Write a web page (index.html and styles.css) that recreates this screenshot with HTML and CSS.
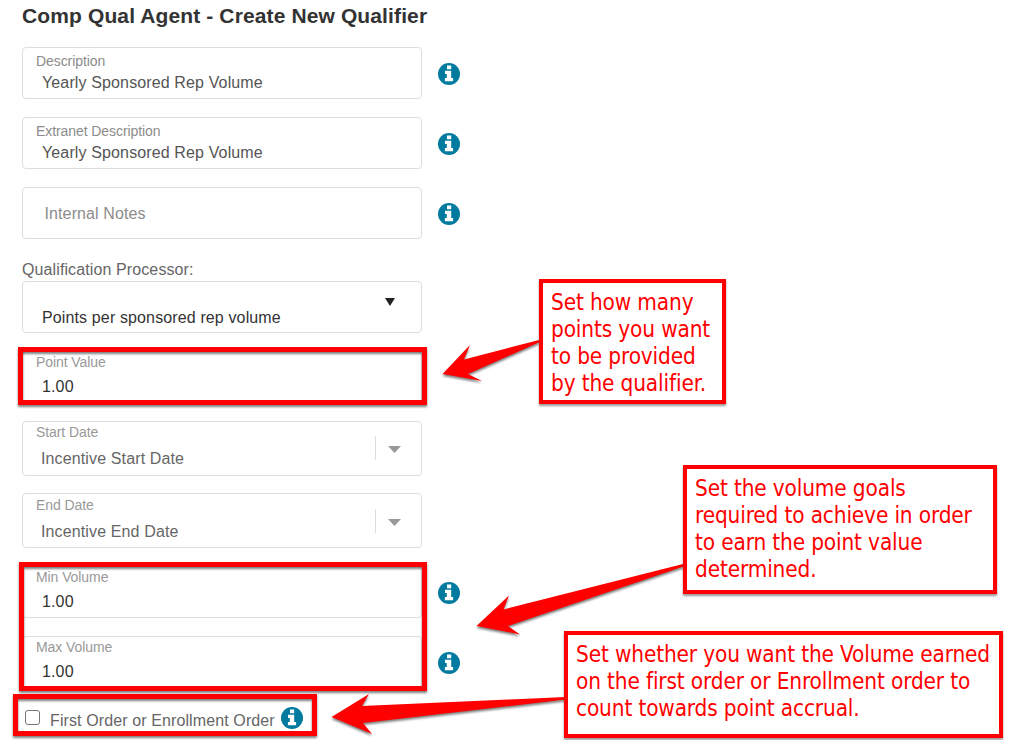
FILE: index.html
```
<!DOCTYPE html>
<html lang="en">
<head>
<meta charset="utf-8">
<title>Comp Qual Agent - Create New Qualifier</title>
<link rel="stylesheet" href="styles.css">
</head>
<body>
<svg class="defs" width="0" height="0">
  <symbol id="info" viewBox="0 0 22 22">
    <circle cx="11" cy="11" r="11" fill="#007a9f"/>
    <path fill="#fff" d="M9 2.400h4.200v3.800H9zM7 7.800h6.200v7.200h1.900v3.200H6.900V15h1.900v-4H7z"/>
  </symbol>
</svg>
<main class="form">
  <h1 class="title">Comp Qual Agent - Create New Qualifier</h1>
  <div class="row">
    <div class="field"><span class="label">Description</span><span class="value">Yearly Sponsored Rep Volume</span></div>
    <svg class="info"><use href="#info"/></svg>
  </div>
  <div class="row">
    <div class="field"><span class="label">Extranet Description</span><span class="value">Yearly Sponsored Rep Volume</span></div>
    <svg class="info"><use href="#info"/></svg>
  </div>
  <div class="row">
    <div class="field empty"><span class="placeholder">Internal Notes</span></div>
    <svg class="info"><use href="#info"/></svg>
  </div>
  <div class="caption">Qualification Processor:</div>
  <div class="row processor">
    <div class="field select"><span class="value dark">Points per sponsored rep volume</span>
      <svg class="caret" viewBox="0 0 10 8"><path d="M0 0h10L5 8z" fill="#222"/></svg></div>
  </div>
  <div class="row">
    <div class="field numeric"><span class="label">Point Value</span><span class="value">1.00</span></div>
  </div>
  <div class="row date">
    <div class="field picker">
      <div class="text"><span class="label">Start Date</span><span class="value">Incentive Start Date</span></div>
      <div class="drop"><svg class="arrow" viewBox="0 0 13 7"><path d="M0 0h13L6.500 7z" fill="#999"/></svg></div>
    </div>
  </div>
  <div class="row date">
    <div class="field picker picker-end">
      <div class="text"><span class="label">End Date</span><span class="value">Incentive End Date</span></div>
      <div class="drop"><svg class="arrow" viewBox="0 0 13 7"><path d="M0 0h13L6.500 7z" fill="#999"/></svg></div>
    </div>
  </div>
  <div class="row">
    <div class="field numeric"><span class="label">Min Volume</span><span class="value">1.00</span></div>
    <svg class="info"><use href="#info"/></svg>
  </div>
  <div class="row">
    <div class="field numeric"><span class="label">Max Volume</span><span class="value">1.00</span></div>
    <svg class="info"><use href="#info"/></svg>
  </div>
  <div class="check"><span class="box"></span><span class="check-text">First Order or Enrollment Order</span><svg class="info"><use href="#info"/></svg></div>
</main>

<div class="mark mark-point"></div>
<div class="mark mark-volume"></div>
<div class="mark mark-order"></div>
<svg class="arrows" viewBox="0 0 1035 740">
  <path d="M442.500 374L470 345L464 359.500L541 339.500V341.500L468 374L482 381Z"/>
  <path d="M476.500 626L509 595.500L503.500 609.500L685 563.500V566L508 626L520 634.500Z"/>
  <path d="M331.500 717L369 694L362 706L566 697V699.500L363 723L372 734Z"/>
</svg>
<div class="callout callout-point"><span>Set how many</span><span>points you want</span><span>to be provided</span><span>by the qualifier.</span></div>
<div class="callout callout-volume"><span>Set the volume goals</span><span>required to achieve in order</span><span>to earn the point value</span><span>determined.</span></div>
<div class="callout callout-order"><span>Set whether you want the Volume earned</span><span>on the first order or Enrollment order to</span><span>count towards point accrual.</span></div>
</body>
</html>
```
FILE: styles.css
```
* { box-sizing: border-box; }
body {
  margin: 0;
  width: 1035px;
  height: 740px;
  position: relative;
  overflow: hidden;
  background: #fff;
  font: 16px/20px "Liberation Sans", Arial, sans-serif;
  letter-spacing: .11px;
  color: #555;
}
.defs { position: absolute; }
.form { padding: 3px 0 0 22px; }
.title { margin: 0 0 18px; font-size: 21px; line-height: 26px; letter-spacing: .12px; color: #333; white-space: nowrap; }
.row { display: flex; align-items: center; gap: 16px; height: 52px; margin-bottom: 18px; }
.field {
  display: flex;
  flex-direction: column;
  width: 400px;
  height: 52px;
  padding: 5px 13px 0;
  border: 1px solid #ddd;
  border-radius: 4px;
}
.label { font-size: 14px; line-height: 17px; letter-spacing: -.08px; color: #8c8c8c; }
.value { padding-left: 6px; margin-top: 3px; line-height: 20px; letter-spacing: .13px; }
.dark { color: #333; }
.empty { justify-content: center; padding: 2px 21.500px 0; }
.placeholder { color: #8c8c8c; }
.info { width: 22px; height: 22px; margin-top: 2px; flex: none; }
.caption { margin-top: 20px; height: 22px; padding-top: 1px; line-height: 20px; color: #666; }
.select { flex-direction: row; justify-content: space-between; padding: 0 26px 0 13px; }
.select .value { margin-top: 26px; }
.caret { width: 10px; height: 8px; margin-top: 16px; }
.numeric { padding-top: 2px; }
.numeric .value { margin-top: 6px; color: #333; }
.numeric .label, .date .label { color: #999; }
.date { height: 55px; }
.date + .date { margin-top: -1px; }
.picker { flex-direction: row; height: 55px; justify-content: space-between; align-items: flex-start; padding: 2px 20px 0 13px; }
.picker-end { padding-top: 3px; }
.text { display: flex; flex-direction: column; }
.text .value { margin-top: 8px; padding-left: 5px; color: #666; }
.drop { display: flex; align-items: center; height: 24px; margin-top: 12px; padding-left: 12px; border-left: 1px solid #ddd; }
.arrow { width: 13px; height: 7px; margin-top: 3px; }
.check { display: flex; align-items: center; height: 24px; padding-left: 3px; color: #666; }
.box { width: 15px; height: 15px; margin-top: -2px; border: 1px solid #767676; border-radius: 3px; }
.check-text { margin: 5px 6px 0 10px; white-space: nowrap; }
.check .info { margin-top: 0; }

.mark { position: absolute; border: 5px solid #f00; filter: drop-shadow(0 2px 1px rgba(0, 0, 0, .5)); }
.mark-point { left: 18px; top: 347px; width: 409px; height: 58px; }
.mark-volume { left: 19px; top: 562px; width: 408px; height: 129px; }
.mark-order { left: 13px; top: 694px; width: 304px; height: 42px; }
.arrows { position: absolute; left: 0; top: 0; width: 1035px; height: 740px; fill: #f00; filter: drop-shadow(0 2px 1px rgba(0, 0, 0, .5)); }
.callout {
  position: absolute;
  display: flex;
  flex-direction: column;
  padding: 6px 8px;
  border: 4px solid #f00;
  background: #fff;
  box-shadow: 0 2px 2px rgba(0, 0, 0, .4);
  color: #f00;
  font: 22.400px/27px "DejaVu Sans Condensed", "DejaVu Sans", sans-serif;
  font-stretch: condensed;
  letter-spacing: -.14px;
  white-space: nowrap;
}
.callout-point { left: 539px; top: 279px; width: 187px; height: 125px; }
.callout-volume { left: 683px; top: 465px; width: 314px; height: 129px; }
.callout-order { left: 564px; top: 631px; width: 439px; height: 107px; }
```
